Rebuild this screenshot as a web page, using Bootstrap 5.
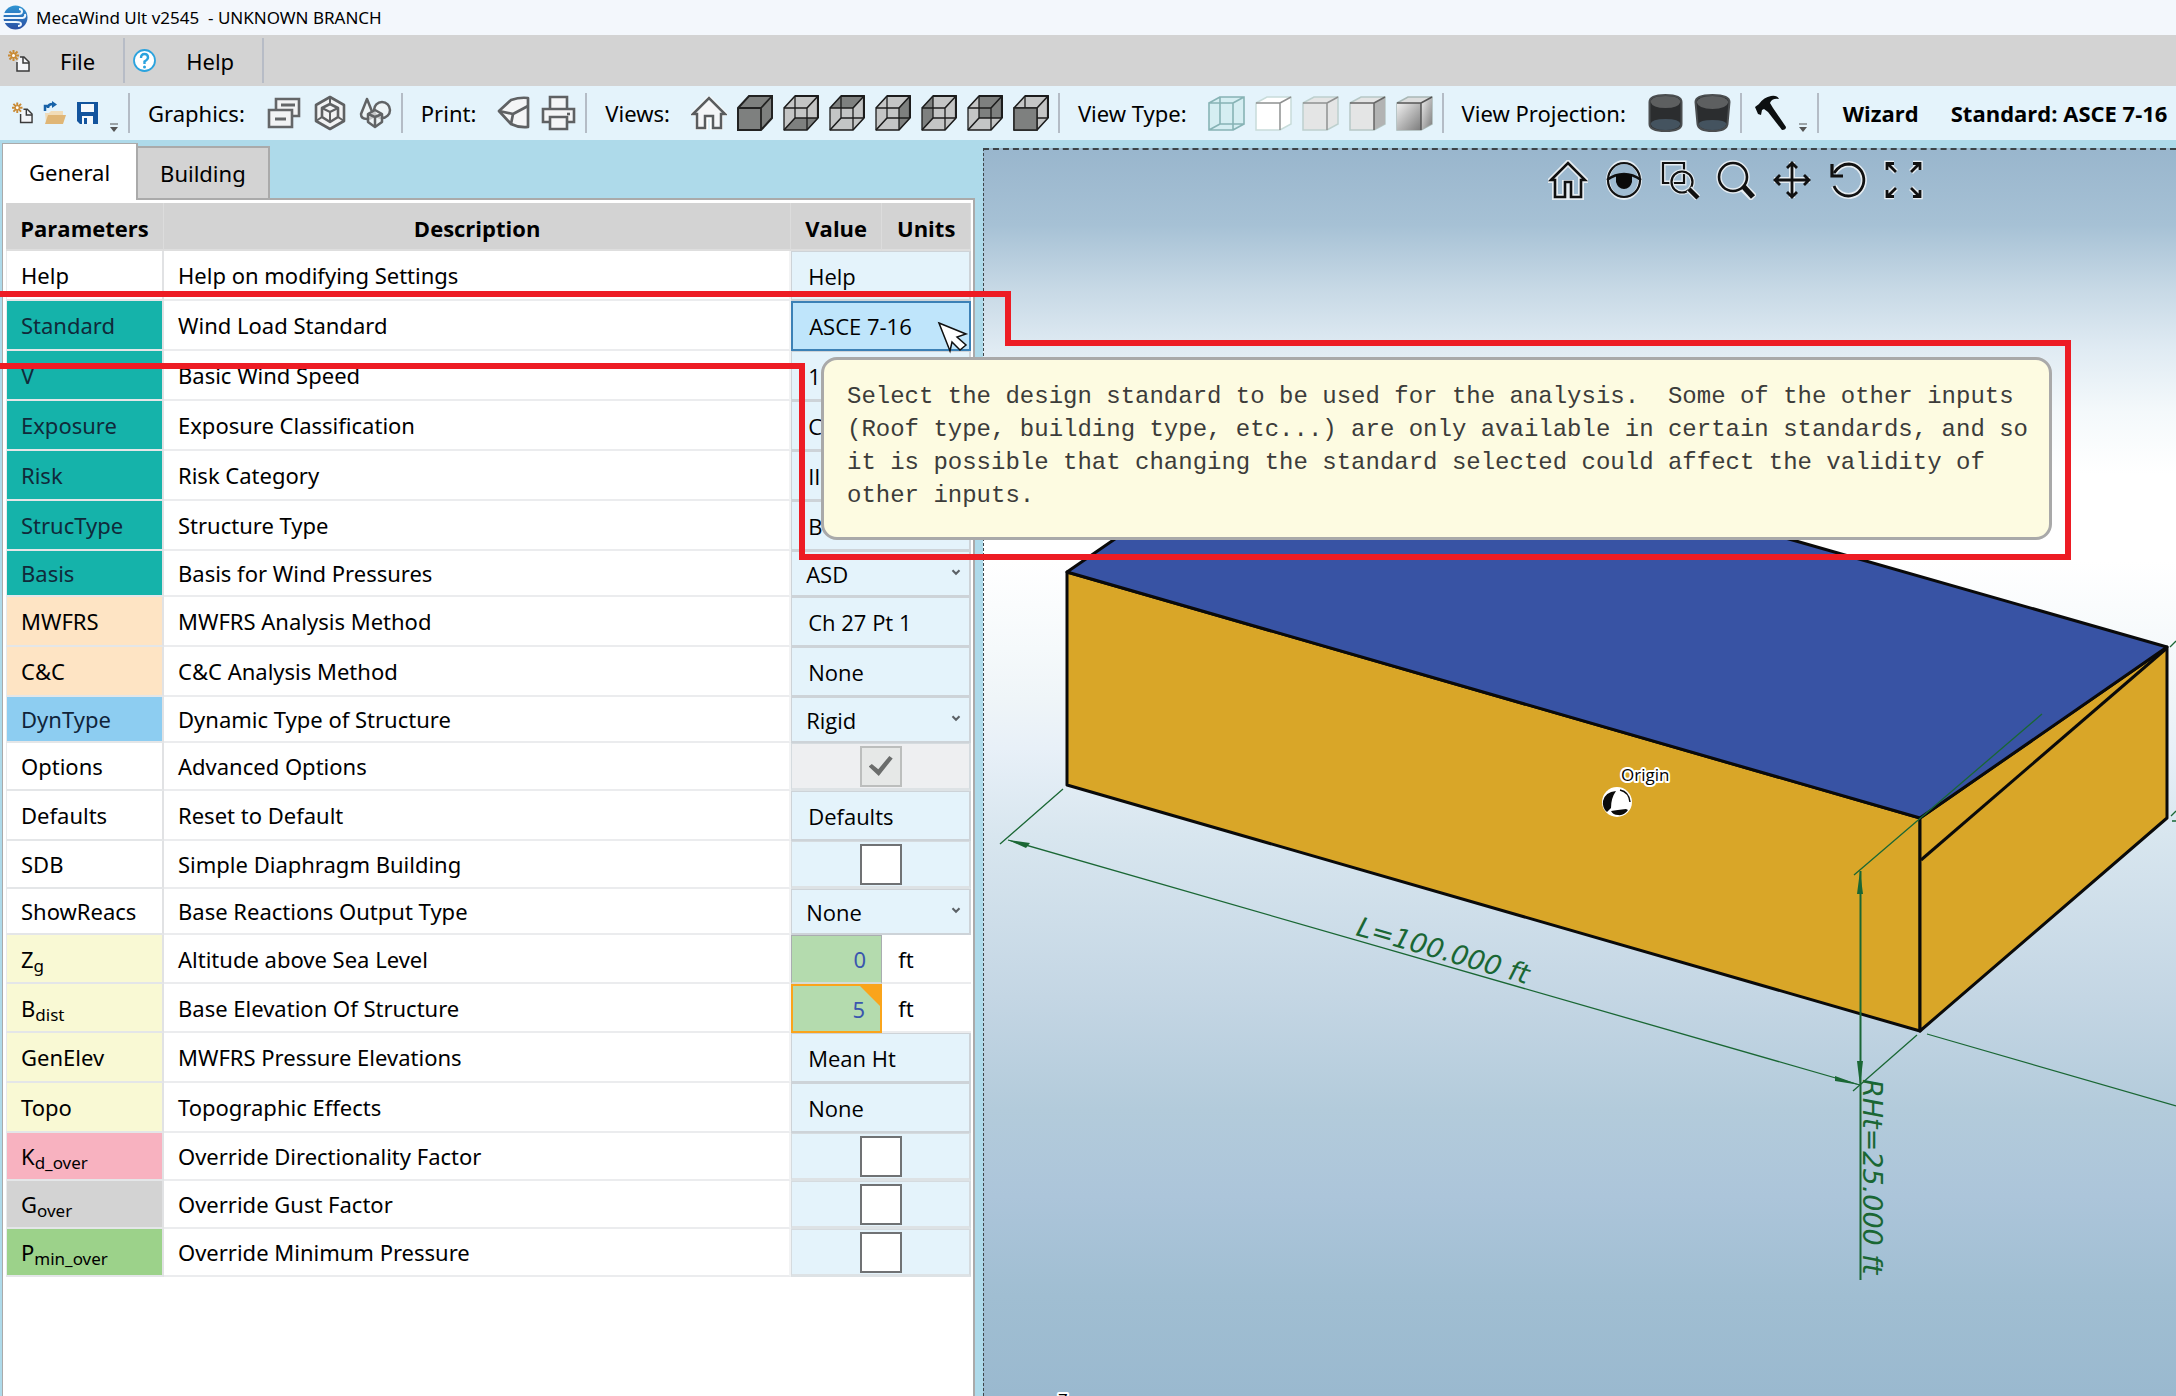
<!DOCTYPE html>
<html lang="en">
<head>
<meta charset="utf-8">
<meta name="viewport" content="width=device-width, initial-scale=1">
<title>MecaWind Ult v2545 - UNKNOWN BRANCH</title>
<link rel="stylesheet" href="https://cdn.jsdelivr.net/npm/bootstrap@5.3.0/dist/css/bootstrap.min.css">
<style>
  body { font-family: "Noto Sans", "Open Sans", sans-serif; font-size: 22px; line-height: 30px; color: #000; background: #aedaea; }
  .app-shell { height: 100vh; }
  .title-strip { height: 35px; background: #f3f7fc; font-size: 17px; line-height: 24px; gap: 8px; padding-left: 3px; }
  .menu-strip { height: 51px; background: #d3d3d3; }
  .menu-strip button, .tool-strip button, .nav-tools button { border: 0; background: none; padding: 0; color: inherit; line-height: inherit; display: flex; align-items: center; }
  .menu-entry { border-right: 2px solid #b7bcc6; height: 45px; }
  .menu-entry button { gap: 30px; padding-right: 28px; }
  .tool-strip { height: 54px; background: #e4f3fb; white-space: nowrap; }
  .tool-group { height: 40px; border-right: 2px solid #b4bcc6; padding: 0 9px 0 18px; gap: 10px; flex: none; }
  .tool-caption { margin-right: 11px; }
  .more-mark { align-self: flex-end; }
  .strong-text { font-family: "Open Sans", sans-serif; font-weight: 700; }
  svg { display: block; flex: none; }

  .side-pane { width: 45%; padding: 3px 4px 0 2px; }
  .pane-tab { border: 2px solid #aaa; border-bottom: 0; height: 52px; background: #d3d3d3; color: #000; padding: 0 22px; border-radius: 0; }
  .pane-tab.active { height: 57px; background: #fff; border-width: 1px 2px 0 1px; padding: 0 26px; margin-right: -2px; margin-bottom: -2px; position: relative; z-index: 1; }
  .pane-sheet { border: 2px solid #aaa; border-left-width: 1px; border-bottom: 0; background: #fff; padding: 3px 2px 0 3px; }

  .param-table { table-layout: fixed; border-collapse: separate; border-spacing: 0; width: 100%; }
  .param-table th { height: 48px; padding: 3px 0 0 0; background: #d3d3d3; border-right: 1px solid #dcdcdc; border-bottom: 2px solid #dedede; font-family: "Open Sans", sans-serif; }
  .param-table td { padding: 0; }
  .param-table td.p-name { padding-left: 14px; border-left: 1px solid #e8eaec; border-right: 2px solid #e1e2e4; border-bottom: 2px solid #e4e6e8; }
  .param-table td.p-text { padding-left: 14px; border-right: 2px solid #f2f3f4; border-bottom: 2px solid #ebecee; }
  .param-table td.p-unit { padding-left: 16px; border-bottom: 2px solid #ebecee; }
  .kind-push td { height: 50px; }
  .kind-list td { height: 46px; }
  .kind-tick td { height: 48px; }
  .kind-num td { height: 49px; }
  .tone-teal { background: #15b3aa; color: #102a3a; }
  .tone-peach { background: #fee4c4; }
  .tone-blue { background: #8dcdf1; color: #10243a; }
  .tone-cream { background: #f9f9d4; }
  .tone-pink { background: #f8b2c0; }
  .tone-grey { background: #d3d3d3; }
  .tone-green { background: #9cd28a; }
  .p-name sub { font-size: 17px; bottom: -4px; }

  .cell-push, .cell-list select { display: block; width: 100%; border: 1px solid #cdd3d8; border-bottom-width: 2px; border-right-width: 2px; background: #e4f3fb; color: #000; font-family: "Open Sans", sans-serif; text-align: left; padding: 0 0 0 16px; border-radius: 0; line-height: 30px; }
  .cell-push { height: 50px; }
  .cell-push.picked { background: #bfe5fb; border: 2px solid #3c81b6; }
  .cell-list { position: relative; display: block; }
  .cell-list select { height: 46px; appearance: none; padding-left: 14px; }
  .cell-list svg { position: absolute; right: 10px; top: 18px; pointer-events: none; }
  .cell-tick { display: flex; justify-content: center; align-items: center; height: 48px; background: #e4f3fb; border: 1px solid #d5dbdf; border-bottom: 3px solid #dde2e5; border-right-width: 2px; }
  .cell-tick input { appearance: none; width: 42px; height: 41px; margin: 0; background: #fff; border: 2px solid #707274; display: grid; place-items: center; }
  .cell-tick.is-off { background: #eeeff1; }
  .cell-tick input:disabled { background: #e6e8e7; border-color: #bcbebd; }
  .cell-tick input:checked::before { content: ""; width: 24px; height: 20px; background: #6b6d6c; clip-path: polygon(0 52%, 13% 40%, 40% 66%, 86% 0, 100% 12%, 42% 100%); }
  .cell-num { position: relative; display: block; }
  .cell-num input { display: block; width: 100%; height: 49px; border: 1px solid #a9adb0; border-bottom: 2px solid #d6dcd6; background: #b4dbae; color: #3a56ae; text-align: right; padding: 0 15px 0 0; border-radius: 0; }
  .cell-num.changed input { border: 2px solid #faa41b; }
  .cell-num.changed::after { content: ""; position: absolute; right: 0; top: 0; border: 12px solid transparent; border-top-color: #faa41b; border-right-color: #faa41b; }

  .scene { margin: 8px 0 0 4px; border: 1px dashed #3c4448; border-width: 2px 0 0 1px; background: linear-gradient(#99b6cd 0%, #a6c1d5 6%, #c6d8e5 11%, #e0ebf3 16%, #f4f9fb 21%, #fff 26%, #fff 33%, #f5f9fb 40%, #eff5f8 44%, #e8f0f8 48%, #d8e6ef 55%, #c4d6e4 68%, #b3cbdb 77%, #acc5da 84%, #a0bed2 92%, #9ab9cf 100%); }
  .nav-tools { position: absolute; top: 10px; left: 564px; gap: 16px; }
  .halo { paint-order: stroke; stroke: #fff; stroke-width: 4px; stroke-linejoin: round; }
  .callout { position: absolute; left: 821px; top: 357px; width: 1231px; height: 183px; padding: 20px 10px 0 23px; border: 3px solid #a9a9a9; border-radius: 16px; background: #fdfbe1; color: #3c3c3a; font-family: "Liberation Mono", monospace; font-size: 24px; line-height: 33px; z-index: 5; }
  .callout p { white-space: pre-wrap; }
  .marker-line { position: absolute; left: 0; top: 0; z-index: 6; pointer-events: none; }
</style>
<script src="https://cdn.jsdelivr.net/npm/bootstrap@5.3.0/dist/js/bootstrap.bundle.min.js"></script>
</head>
<body class="overflow-hidden">

<svg width="0" height="0" class="position-absolute">
  <defs>
    <symbol id="i-new" viewBox="0 0 22 22"><g stroke="#c98a35" stroke-width="2"><path d="M5.500 0v11M0 5.500h11M1.500 1.500l8 8M9.500 1.500l-8 8"/></g><circle cx="5.500" cy="5.500" r="1.500" fill="#fff"/><path d="M12 7h4l5 5v9H9v-9" fill="#f4f5f8" stroke="#3a3a3a" stroke-width="1.500"/><path d="M15 7v6h6" fill="none" stroke="#3a3a3a" stroke-width="1.500"/></symbol>
    <symbol id="i-more" viewBox="0 0 10 10"><path d="M1 1h8" stroke="#555" stroke-width="1"/><path d="M1 4h8L5 9z" fill="#555"/></symbol>
    <symbol id="i-house" viewBox="0 0 36 36"><path d="M2 19L18 3l16 16h-4v14h-9V22h-6v11H6V19z" fill="#f4f5f7" stroke="#fff" stroke-width="4" stroke-linejoin="round"/><path d="M2 19L18 3l16 16h-4v14h-8V21h-8v12H6V19z" fill="#f4f5f7" stroke="#5a5c5e" stroke-width="2.500"/></symbol>
    <symbol id="i-frame" viewBox="0 0 36 36"><g fill="none" stroke="#1c1c1c" stroke-width="1.600" stroke-linejoin="round"><path d="M1 13h23v22H1zM12 1h23v22H12z" stroke-width="1.300"/><path d="M1 13L12 1M24 13L35 1M24 35l11-12M1 35l11-12"/><path d="M12 1h23v22" stroke-width="2.200"/></g></symbol>
    <symbol id="i-chev" viewBox="0 0 8 6"><path d="M1 1l3 3 3-3" fill="none" stroke="#5b6166" stroke-width="1.800"/></symbol>
    <linearGradient id="shade" x1="0" y1="0" x2="1" y2="1"><stop offset="0" stop-color="#f0f0f0"/><stop offset="1" stop-color="#7c7c7c"/></linearGradient>
    <linearGradient id="ball" x1="0" y1="0" x2="0" y2="1"><stop offset="0" stop-color="#2f95d3"/><stop offset="1" stop-color="#2b4fa3"/></linearGradient>
    <symbol id="i-drum" viewBox="0 0 36 38"><path d="M2 8Q2 1 18 1t16 7v22q0 7-16 7T2 30z" fill="#2b2d2f" stroke="#4b4e50" stroke-width="2"/><path d="M3 8Q4 2 18 2t15 6q-2 6-15 6T3 8z" fill="#5d5f60"/><path d="M3 30q1-5 15-5t15 5q-2 6-15 6T3 30z" fill="#44535f"/></symbol>
    <symbol id="i-drum-far" viewBox="0 0 36 38"><path d="M1 8Q1 1 18 1t17 7l-2 22q-1 7-15 7T3 30z" fill="#2b2d2f" stroke="#4b4e50" stroke-width="2"/><path d="M2 8Q4 2 18 2t16 6q-2 7-16 7T2 8z" fill="#5d5f60"/><path d="M4 30q1-4 14-4t14 4q-2 6-14 6T4 30z" fill="#44535f"/></symbol>
  </defs>
</svg>

<div class="app-shell d-flex flex-column position-relative">

  <header class="title-strip d-flex align-items-center flex-shrink-0">
    <svg width="25" height="25" viewBox="0 0 25 25"><circle cx="12.500" cy="12.500" r="12" fill="url(#ball)"/><g fill="none" stroke="#eef6fd" stroke-width="2"><path d="M0 9h15q4 0 4-2.500t-3-2.500M0 13h20M0 17h13q5 0 5 2t-3 2M20 13q3-1 2-4"/></g></svg>
    <span>MecaWind Ult v2545&nbsp; - UNKNOWN BRANCH</span>
  </header>

  <nav class="menu-strip d-flex align-items-center flex-shrink-0">
    <div class="menu-entry d-flex align-items-center ps-2"><button type="button"><svg width="22" height="22"><use href="#i-new"/></svg><span>File</span></button></div>
    <div class="menu-entry d-flex align-items-center ps-2"><button type="button"><svg width="23" height="23" viewBox="0 0 23 23"><circle cx="11.500" cy="11.500" r="10.500" fill="#fff" stroke="#2ba3de" stroke-width="1.800"/><path d="M8 9q0-4 3.500-4T15 8.500q0 2-3.500 4V15" fill="none" stroke="#2ba3de" stroke-width="2.400"/><circle cx="11.500" cy="18" r="1.500" fill="#2ba3de"/></svg><span>Help</span></button></div>
  </nav>

  <nav class="tool-strip d-flex align-items-center flex-shrink-0 overflow-hidden">
    <div class="tool-group d-flex align-items-center ps-2">
      <button type="button" aria-label="New" class="ps-1"><svg width="21" height="22"><use href="#i-new"/></svg></button>
      <button type="button" aria-label="Open"><svg width="24" height="24" viewBox="0 0 24 24"><path d="M2 10V5h3M5 7q0-4 5-4" fill="none" stroke="#1862a8" stroke-width="2.500"/><path d="M9 0l5 3.500L9 7z" fill="#1862a8"/><path d="M2 12h4l2-2h12v12H3z" fill="#f1dcb8"/><path d="M5 14h18l-3 9H2z" fill="#e0b676"/></svg></button>
      <button type="button" aria-label="Save"><svg width="22" height="24" viewBox="0 0 22 24"><path d="M0 1h21v22H3l-3-3z" fill="#13549d"/><path d="M4 3h13v8H4zM5 15h11v8H5z" fill="#f4f8fc"/><path d="M7 17h3v6H7z" fill="#13549d"/></svg></button>
      <button type="button" aria-label="More" class="more-mark"><svg width="10" height="10"><use href="#i-more"/></svg></button>
    </div>
    <div class="tool-group d-flex align-items-center">
      <span class="tool-caption">Graphics:</span>
      <button type="button" aria-label="Windows"><svg width="36" height="34" viewBox="0 0 36 34"><g fill="#f2f3f4" stroke="#646668" stroke-width="2.600"><path d="M10 3h23v17H10z"/><path d="M15 9h14" stroke-width="3"/><path d="M3 14h23v17H3z"/><path d="M9 23h11" stroke-width="3"/></g></svg></button>
      <button type="button" aria-label="Block"><svg width="36" height="36" viewBox="0 0 36 36"><g fill="#f2f3f4" stroke="#5f6163" stroke-width="2.600" stroke-linejoin="round"><path d="M18 2l14 8v16l-14 8-14-8V10z"/><path d="M18 9l8 4v9l-8 5-8-5v-9z" /><path d="M10 13l8 4 8-4M18 17v10M18 2v7M4 26l6-4M32 26l-6-4" fill="none" stroke-width="2"/></g></svg></button>
      <button type="button" aria-label="Shapes"><svg width="34" height="34" viewBox="0 0 34 34"><g fill="#f2f3f4" fill-opacity=".7" stroke="#616365" stroke-width="2.500" stroke-linejoin="round"><circle cx="24" cy="14" r="8"/><path d="M9 3L3 18q0 5 6 5t6-5z"/><path d="M17 14l7 4v8l-7 5-7-5v-8z"/><path d="M10 18l7 3 7-3M17 21v10" fill="none"/></g></svg></button>
    </div>
    <div class="tool-group d-flex align-items-center">
      <span class="tool-caption">Print:</span>
      <button type="button" aria-label="Print model"><svg width="34" height="36" viewBox="0 0 34 36"><g fill="#f4f5f6" stroke="#5f6163" stroke-width="2.700" stroke-linejoin="round"><path d="M2 16L14 5q9-3 17-2v29q-9 1-17-3z"/><path d="M2 16l14 3 15-8M16 19l-2 10" fill="none"/></g></svg></button>
      <button type="button" aria-label="Print"><svg width="35" height="36" viewBox="0 0 35 36"><g fill="#f4f5f6" stroke="#5f6163" stroke-width="2.600"><path d="M9 14V2h17v12"/><path d="M2 14h31v13H2z"/><path d="M9 22h17v12H9z"/><path d="M26 19h3" /></g></svg></button>
    </div>
    <div class="tool-group d-flex align-items-center">
      <span class="tool-caption">Views:</span>
      <button type="button" aria-label="Home view"><svg width="36" height="36"><use href="#i-house"/></svg></button>
      <button type="button" aria-label="Solid"><svg width="36" height="36" viewBox="0 0 36 36"><path d="M1 13L12 1h23v22L24 35H1z" fill="#7e807f" stroke="#222" stroke-width="2"/><path d="M1 13h23v22M24 13L35 1" fill="none" stroke="#222" stroke-width="1.800"/></svg></button>
      <button type="button" aria-label="Bottom"><svg width="36" height="36" viewBox="0 0 36 36"><path d="M1 13L12 1h23v22L24 35H1z" fill="#c4c5c5"/><path d="M1 35h23l11-12H12z" fill="#7e807f"/><use href="#i-frame"/></svg></button>
      <button type="button" aria-label="Top"><svg width="36" height="36" viewBox="0 0 36 36"><path d="M1 13L12 1h23v22L24 35H1z" fill="#c4c5c5"/><path d="M1 13h23L35 1H12z" fill="#7e807f"/><use href="#i-frame"/></svg></button>
      <button type="button" aria-label="Right"><svg width="36" height="36" viewBox="0 0 36 36"><path d="M1 13L12 1h23v22L24 35H1z" fill="#c4c5c5"/><path d="M24 13L35 1v22L24 35z" fill="#7e807f"/><use href="#i-frame"/></svg></button>
      <button type="button" aria-label="Left"><svg width="36" height="36" viewBox="0 0 36 36"><path d="M1 13L12 1h23v22L24 35H1z" fill="#c4c5c5"/><path d="M1 13L12 1v22L1 35z" fill="#7e807f"/><use href="#i-frame"/></svg></button>
      <button type="button" aria-label="Back"><svg width="36" height="36" viewBox="0 0 36 36"><path d="M1 13L12 1h23v22L24 35H1z" fill="#c4c5c5"/><path d="M12 1h23v22H12z" fill="#7e807f"/><use href="#i-frame"/></svg></button>
      <button type="button" aria-label="Front"><svg width="36" height="36" viewBox="0 0 36 36"><path d="M1 13L12 1h23v22L24 35H1z" fill="#c4c5c5"/><use href="#i-frame"/><path d="M1 13h23v22H1z" fill="#7e807f" stroke="#222" stroke-width="1.500"/></svg></button>
    </div>
    <div class="tool-group d-flex align-items-center">
      <span class="tool-caption">View Type:</span>
      <button type="button" aria-label="Wireframe"><svg width="37" height="36" viewBox="0 0 37 36"><path d="M1 8L12 2h24v27l-11 6H1z" fill="#d5eef2"/><path d="M1 8h24v27H1zM12 2h24v27H12zM1 8l11-6M25 8l11-6M25 35l11-6M1 35l11-6" fill="none" stroke="#87b3b5" stroke-width="1.600"/></svg></button>
      <button type="button" aria-label="Hidden line"><svg width="37" height="36" viewBox="0 0 37 36"><path d="M1 8L12 2h24v27l-11 6H1z" fill="#fff" stroke="#c8dcda" stroke-width="1.500"/><path d="M1 8h24v27M25 8l11-6" fill="none" stroke="#8f9191" stroke-width="1.500"/></svg></button>
      <button type="button" aria-label="Flat light"><svg width="37" height="36" viewBox="0 0 37 36"><path d="M1 8L12 2h24v27l-11 6H1z" fill="#e4e5e5" stroke="#bdd0ce" stroke-width="1.500"/><path d="M1 8h24v27M25 8l11-6" fill="none" stroke="#8f9191" stroke-width="1.500"/></svg></button>
      <button type="button" aria-label="Flat"><svg width="37" height="36" viewBox="0 0 37 36"><path d="M1 8L12 2h24v27l-11 6H1z" fill="#e4e5e5" stroke="#b6c8c6" stroke-width="1.500"/><path d="M25 8l11-6v27l-11 6z" fill="#b2b3b3"/><path d="M1 8h24v27M25 8l11-6" fill="none" stroke="#666" stroke-width="1.500"/></svg></button>
      <button type="button" aria-label="Shaded"><svg width="37" height="36" viewBox="0 0 37 36"><path d="M1 8L12 2h24v27l-11 6H1z" fill="#dcdddd" stroke="#a9b8b6" stroke-width="1.500"/><path d="M1 8h24v27H1z" fill="url(#shade)"/><path d="M25 8l11-6v27l-11 6z" fill="url(#shade)"/><path d="M1 8h24v27M25 8l11-6" fill="none" stroke="#555" stroke-width="1.500"/></svg></button>
    </div>
    <div class="tool-group d-flex align-items-center">
      <span class="tool-caption">View Projection:</span>
      <button type="button" aria-label="Parallel"><svg width="37" height="38"><use href="#i-drum"/></svg></button>
      <button type="button" aria-label="Perspective"><svg width="37" height="38"><use href="#i-drum-far"/></svg></button>
    </div>
    <div class="tool-group d-flex align-items-center ps-2">
      <button type="button" aria-label="Tools" class="ps-1"><svg width="34" height="36" viewBox="0 0 34 36"><path d="M1 12l4-3q5-7 12-8 6-1 8 3-7-1-9 4l3 5 13 19q0 3-4 3L14 17l-4-3-2 1-1 5-3-1z" fill="#0c0f10"/></svg></button>
      <button type="button" aria-label="More" class="more-mark"><svg width="10" height="10"><use href="#i-more"/></svg></button>
    </div>
    <button type="button" class="strong-text ms-4">Wizard</button>
    <span class="strong-text ms-4 ps-2">Standard: ASCE 7-16</span>
  </nav>

  <main class="d-flex flex-grow-1">
    <section class="side-pane d-flex flex-column flex-shrink-0">
      <div class="d-flex align-items-end" role="tablist">
        <button type="button" role="tab" class="pane-tab active">General</button>
        <button type="button" role="tab" class="pane-tab">Building</button>
      </div>
      <div class="pane-sheet flex-grow-1">
        <table class="param-table">
          <colgroup><col style="width:158px"><col><col style="width:91px"><col style="width:89px"></colgroup>
          <thead><tr><th class="text-center">Parameters</th><th class="text-center">Description</th><th class="text-center">Value</th><th class="text-center">Units</th></tr></thead>
          <tbody>
            <tr class="kind-push"><td class="p-name">Help</td><td class="p-text">Help on modifying Settings</td><td colspan="2"><button type="button" class="cell-push">Help</button></td></tr>
            <tr class="kind-push"><td class="p-name tone-teal">Standard</td><td class="p-text">Wind Load Standard</td><td colspan="2"><button type="button" class="cell-push picked">ASCE 7-16</button></td></tr>
            <tr class="kind-push"><td class="p-name tone-teal">V</td><td class="p-text">Basic Wind Speed</td><td colspan="2"><button type="button" class="cell-push">1</button></td></tr>
            <tr class="kind-push"><td class="p-name tone-teal">Exposure</td><td class="p-text">Exposure Classification</td><td colspan="2"><button type="button" class="cell-push">C</button></td></tr>
            <tr class="kind-push"><td class="p-name tone-teal">Risk</td><td class="p-text">Risk Category</td><td colspan="2"><button type="button" class="cell-push">II</button></td></tr>
            <tr class="kind-push"><td class="p-name tone-teal">StrucType</td><td class="p-text">Structure Type</td><td colspan="2"><button type="button" class="cell-push">B</button></td></tr>
            <tr class="kind-list"><td class="p-name tone-teal">Basis</td><td class="p-text"><label for="f-basis">Basis for Wind Pressures</label></td><td colspan="2"><span class="cell-list"><select id="f-basis"><option>ASD</option></select><svg width="10" height="7"><use href="#i-chev"/></svg></span></td></tr>
            <tr class="kind-push"><td class="p-name tone-peach">MWFRS</td><td class="p-text">MWFRS Analysis Method</td><td colspan="2"><button type="button" class="cell-push">Ch 27 Pt 1</button></td></tr>
            <tr class="kind-push"><td class="p-name tone-peach">C&amp;C</td><td class="p-text">C&amp;C Analysis Method</td><td colspan="2"><button type="button" class="cell-push">None</button></td></tr>
            <tr class="kind-list"><td class="p-name tone-blue">DynType</td><td class="p-text"><label for="f-dyn">Dynamic Type of Structure</label></td><td colspan="2"><span class="cell-list"><select id="f-dyn"><option>Rigid</option></select><svg width="10" height="7"><use href="#i-chev"/></svg></span></td></tr>
            <tr class="kind-tick"><td class="p-name">Options</td><td class="p-text"><label for="f-opt">Advanced Options</label></td><td colspan="2"><span class="cell-tick is-off"><input type="checkbox" id="f-opt" checked disabled></span></td></tr>
            <tr class="kind-push"><td class="p-name">Defaults</td><td class="p-text">Reset to Default</td><td colspan="2"><button type="button" class="cell-push">Defaults</button></td></tr>
            <tr class="kind-tick"><td class="p-name">SDB</td><td class="p-text"><label for="f-sdb">Simple Diaphragm Building</label></td><td colspan="2"><span class="cell-tick"><input type="checkbox" id="f-sdb"></span></td></tr>
            <tr class="kind-list"><td class="p-name">ShowReacs</td><td class="p-text"><label for="f-reac">Base Reactions Output Type</label></td><td colspan="2"><span class="cell-list"><select id="f-reac"><option>None</option></select><svg width="10" height="7"><use href="#i-chev"/></svg></span></td></tr>
            <tr class="kind-num"><td class="p-name tone-cream">Z<sub>g</sub></td><td class="p-text"><label for="f-zg">Altitude above Sea Level</label></td><td><span class="cell-num"><input type="text" id="f-zg" value="0"></span></td><td class="p-unit">ft</td></tr>
            <tr class="kind-num"><td class="p-name tone-cream">B<sub>dist</sub></td><td class="p-text"><label for="f-bd">Base Elevation Of Structure</label></td><td><span class="cell-num changed"><input type="text" id="f-bd" value="5"></span></td><td class="p-unit">ft</td></tr>
            <tr class="kind-push"><td class="p-name tone-cream">GenElev</td><td class="p-text">MWFRS Pressure Elevations</td><td colspan="2"><button type="button" class="cell-push">Mean Ht</button></td></tr>
            <tr class="kind-push"><td class="p-name tone-cream">Topo</td><td class="p-text">Topographic Effects</td><td colspan="2"><button type="button" class="cell-push">None</button></td></tr>
            <tr class="kind-tick"><td class="p-name tone-pink">K<sub>d_over</sub></td><td class="p-text"><label for="f-kd">Override Directionality Factor</label></td><td colspan="2"><span class="cell-tick"><input type="checkbox" id="f-kd"></span></td></tr>
            <tr class="kind-tick"><td class="p-name tone-grey">G<sub>over</sub></td><td class="p-text"><label for="f-g">Override Gust Factor</label></td><td colspan="2"><span class="cell-tick"><input type="checkbox" id="f-g"></span></td></tr>
            <tr class="kind-tick"><td class="p-name tone-green">P<sub>min_over</sub></td><td class="p-text"><label for="f-p">Override Minimum Pressure</label></td><td colspan="2"><span class="cell-tick"><input type="checkbox" id="f-p"></span></td></tr>
          </tbody>
        </table>
      </div>
    </section>

    <section class="scene flex-grow-1 position-relative overflow-hidden">
      <svg class="position-absolute w-100 h-100" viewBox="984 149 1192 1246" preserveAspectRatio="xMinYMin slice">
        <g stroke="#0a0a0a" stroke-width="3" stroke-linejoin="round">
          <path d="M1067 571L1920 817V1030L1067 784z" fill="#d9a628"/>
          <path d="M1920 817L2167 646V817L1920 1030z" fill="#d9a628"/>
          <path d="M1067 571L1141 520H1726L2167 646 1920 817z" fill="#3853a4"/>
          <path d="M1921 859L2167 647" fill="none"/>
        </g>
        <g stroke="#1a6734" stroke-width="1.300" fill="none">
          <path d="M1063 788L1000 843M1008 839L1860 1084M1917 1034L1853 1090M1854 874L2042 713M1927 1033L2176 1105M2170 646L2176 640M2171 815L2176 810M2172 820H2176"/>
          <path d="M1860.500 870V1279" stroke-width="2"/>
        </g>
        <g fill="#1a6734">
          <path d="M1008 839l22 3-4 5zM1860 1084l-25-9v5zM1860 870l3 23h-6zM1860 1085l3-25h-6z"/>
          <text transform="translate(1355 934) rotate(16)" font-family="DejaVu Sans" font-style="italic" font-size="27">L=100.000 ft</text>
          <text transform="translate(1863 1078) rotate(90)" font-family="DejaVu Sans" font-style="italic" font-size="27">RHt=25.000 ft</text>
        </g>
        <circle cx="1617" cy="801" r="15" fill="#fff"/>
        <path d="M1616 790q-5 7-5 17l-4 4q-5-4-4-11 2-9 13-10zM1611 810q6-1 15-2l2 1q-4 6-10 5-5 0-7-4z" fill="#0b0b0b"/>
        <path d="M1620 789q9 2 10 12" fill="none" stroke="#0b0b0b" stroke-width="1.500"/>
        <text class="halo" x="1621" y="780" font-size="17" font-family="Open Sans">Origin</text>
        <text class="halo" x="1058" y="1405" font-size="17" font-family="Open Sans">Z</text>
      </svg>
      <div class="nav-tools d-flex align-items-center">
        <button type="button" aria-label="Home"><svg width="40" height="40" viewBox="0 0 40 40"><g fill="none" stroke-linejoin="miter"><path d="M3 20L20 3l17 17h-4v17H23V23h-6v14H7V20z" stroke="#e6edf2" stroke-width="6"/><path d="M3 20L20 3l17 17h-4v17H23V22h-6v15H7V20z" stroke="#111" stroke-width="2.600"/></g></svg></button>
        <button type="button" aria-label="Look"><svg width="40" height="40" viewBox="0 0 40 40"><g fill="none"><ellipse cx="20" cy="20" rx="16" ry="18" stroke="#e6edf2" stroke-width="4"/><ellipse cx="20" cy="20" rx="16" ry="17" stroke="#111" stroke-width="2.200"/><path d="M3 20q8-6 17-6t17 6" stroke="#111" stroke-width="2.500"/></g><path d="M12 14h16v8q-2 7-8 7t-8-7z" fill="#0a0a0a"/></svg></button>
        <button type="button" aria-label="Zoom window"><svg width="40" height="40" viewBox="0 0 40 40"><g fill="none"><path d="M3 3h21v20H3z" stroke="#e6edf2" stroke-width="5"/><path d="M3 3h21v20H3z" stroke="#111" stroke-width="2.200"/><circle cx="22" cy="22" r="10.500" stroke="#e6edf2" stroke-width="4.500"/><circle cx="22" cy="22" r="10.500" stroke="#111" stroke-width="2.200"/><path d="M29 29l9 9" stroke="#e6edf2" stroke-width="7"/><path d="M29 29l9 9" stroke="#111" stroke-width="4.500"/></g></svg></button>
        <button type="button" aria-label="Zoom"><svg width="40" height="40" viewBox="0 0 40 40"><g fill="none"><circle cx="17" cy="17" r="14" stroke="#e6edf2" stroke-width="5.500"/><path d="M26 26l12 12" stroke="#e6edf2" stroke-width="9"/><circle cx="17" cy="17" r="14" stroke="#111" stroke-width="2.600"/><path d="M27 26l10 11" stroke="#111" stroke-width="5.500"/></g></svg></button>
        <button type="button" aria-label="Pan"><svg width="40" height="40" viewBox="0 0 40 40"><g fill="none"><path d="M20 2v36M2 20h36" stroke="#e6edf2" stroke-width="6"/><path d="M20 3v34M3 20h34M15 8l5-5 5 5M15 32l5 5 5-5M8 15l-5 5 5 5M32 15l5 5-5 5" stroke="#111" stroke-width="2.800"/></g></svg></button>
        <button type="button" aria-label="Rotate"><svg width="40" height="40" viewBox="0 0 40 40"><g fill="none"><path d="M6 13Q12 4 21 4a15.500 16 0 1 1-15 22" stroke="#e6edf2" stroke-width="6"/><path d="M6 13Q12 4 21 4a15.500 16 0 1 1-15 22" stroke="#111" stroke-width="2.800"/><path d="M4 4v12h11" stroke="#111" stroke-width="3.200"/></g></svg></button>
        <button type="button" aria-label="Zoom extents"><svg width="40" height="40" viewBox="0 0 40 40"><g fill="none"><path d="M3 10V3.500h7M4 4l8 8M36 10V3.500h-7M35 4l-8 8M3 30v6.500h7M4 36l8-8M36 30v6.500h-7M35 36l-8-8" stroke="#e6edf2" stroke-width="5.500"/><path d="M3 10V3.500h7M4 4l8 8M36 10V3.500h-7M35 4l-8 8M3 30v6.500h7M4 36l8-8M36 30v6.500h-7M35 36l-8-8" stroke="#111" stroke-width="2.800"/></g></svg></button>
      </div>
    </section>
  </main>

  <div class="callout" role="tooltip" id="std-tip"><p class="mb-0">Select the design standard to be used for the analysis.  Some of the other inputs (Roof type, building type, etc...) are only available in certain standards, and so it is possible that changing the standard selected could affect the validity of other inputs.</p></div>

  <svg class="marker-line" width="2176" height="1396" viewBox="0 0 2176 1396">
    <path d="M0 294H1008V343H2068V557H802V366H0" fill="none" stroke="#ed1c24" stroke-width="6"/>
    <path d="M939 323l27 11-9 3 9 8-6 5-8-8-2 9z" fill="#fff" stroke="#111" stroke-width="1.500"/>
  </svg>
</div>
</body>
</html>
